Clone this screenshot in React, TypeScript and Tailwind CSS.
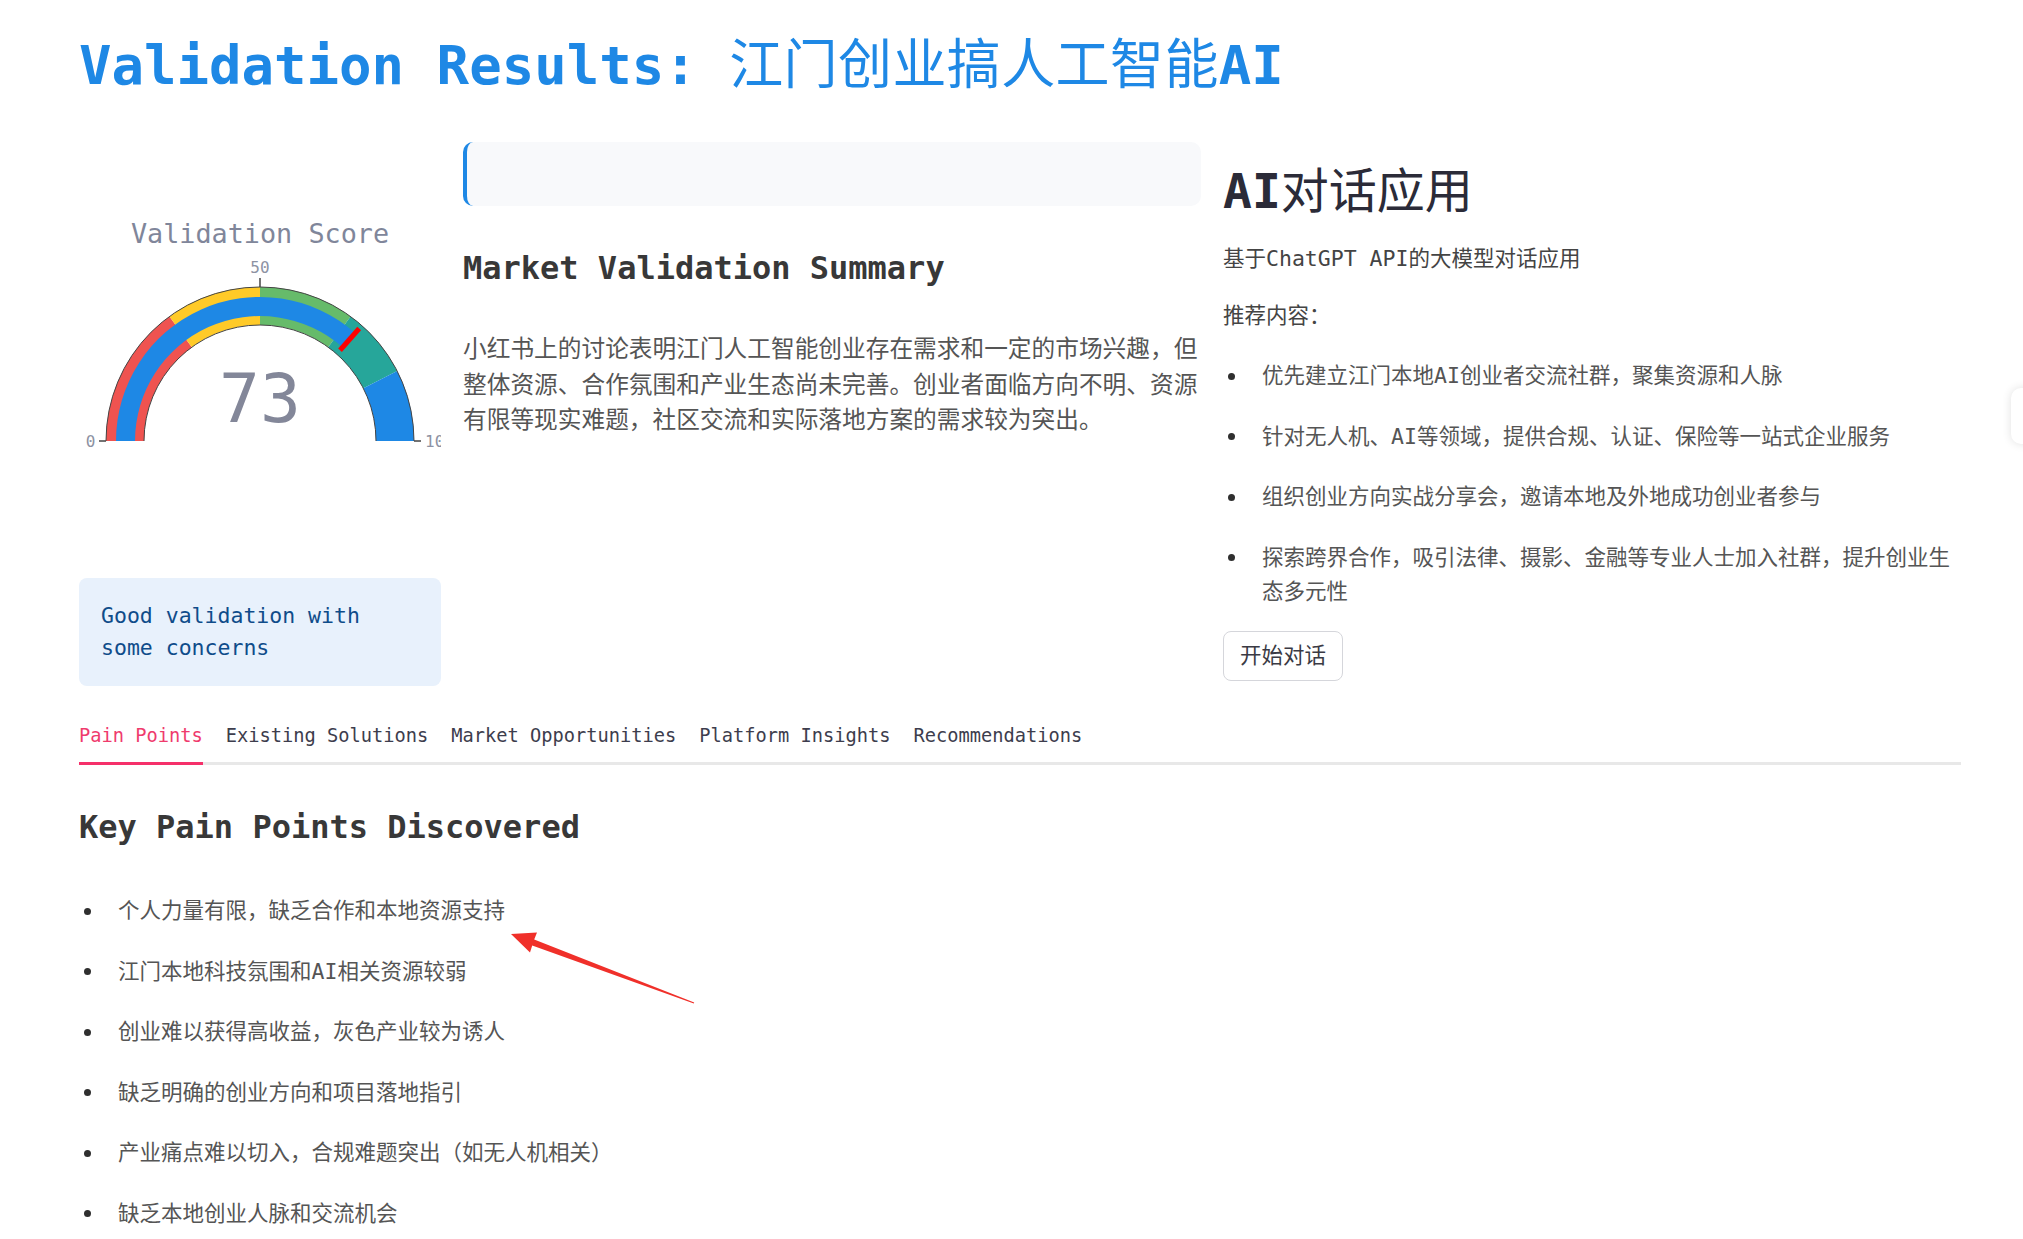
import React from 'react';

const painPoints = [
  '个人力量有限，缺乏合作和本地资源支持',
  '江门本地科技氛围和AI相关资源较弱',
  '创业难以获得高收益，灰色产业较为诱人',
  '缺乏明确的创业方向和项目落地指引',
  '产业痛点难以切入，合规难题突出（如无人机相关）',
  '缺乏本地创业人脉和交流机会',
];

const suggestions = [
  '优先建立江门本地AI创业者交流社群，聚集资源和人脉',
  '针对无人机、AI等领域，提供合规、认证、保险等一站式企业服务',
  '组织创业方向实战分享会，邀请本地及外地成功创业者参与',
  '探索跨界合作，吸引法律、摄影、金融等专业人士加入社群，提升创业生态多元性',
];

const tabs = ['Pain Points', 'Existing Solutions', 'Market Opportunities', 'Platform Insights', 'Recommendations'];

const steps: [number, number, string][] = [
  [0, 30, '#ef5350'],
  [30, 50, '#ffca28'],
  [50, 70, '#66bb6a'],
  [70, 85, '#26a69a'],
  [85, 100, '#1e88e5'],
];

// plotly-like gauge, centre at (181, 299) inside the column
function Gauge({ value }: { value: number }) {
  const cx = 181;
  const cy = 299;

  const pt = (v: number, r: number) => {
    const a = Math.PI - (v / 100) * Math.PI;
    return [cx + r * Math.cos(a), cy - r * Math.sin(a)];
  };

  const sector = (a: number, b: number, ro: number, ri: number) => {
    const [x1, y1] = pt(a, ro);
    const [x2, y2] = pt(b, ro);
    const [x3, y3] = pt(b, ri);
    const [x4, y4] = pt(a, ri);
    return `M${x1} ${y1} A${ro} ${ro} 0 0 1 ${x2} ${y2} L${x3} ${y3} A${ri} ${ri} 0 0 0 ${x4} ${y4} Z`;
  };

  const arc = (r: number) => {
    const [x1, y1] = pt(0, r);
    const [x2, y2] = pt(100, r);
    return `M${x1} ${y1} A${r} ${r} 0 0 1 ${x2} ${y2}`;
  };

  const [t1x, t1y] = pt(value, 121);
  const [t2x, t2y] = pt(value, 150);

  return (
    <svg width="362" height="400" viewBox="0 0 362 400" className="block">
      <text x="181" y="100.5" textAnchor="middle" fontSize="26.8" fill="#80869a" fontFamily="DejaVu Sans Mono, monospace">
        Validation Score
      </text>
      {steps.map(([a, b, c]) => (
        <path key={a} d={sector(a, b, 154, 116)} fill={c} />
      ))}
      <path d={sector(0, value, 144, 125)} fill="#1e88e5" />
      <path d={arc(154)} fill="none" stroke="#444" strokeWidth="1" />
      <path d={arc(116)} fill="none" stroke="#444" strokeWidth="1" />
      <line x1={t1x} y1={t1y} x2={t2x} y2={t2y} stroke="#ff0000" strokeWidth="5" />
      <line x1="20" y1="299" x2="27" y2="299" stroke="#444" strokeWidth="1.5" />
      <line x1="181" y1="136" x2="181" y2="145" stroke="#444" strokeWidth="1.5" />
      <line x1="335" y1="299" x2="342" y2="299" stroke="#444" strokeWidth="1.5" />
      <g fontSize="16" fill="#8d92a3" fontFamily="DejaVu Sans Mono, monospace">
        <text x="16.5" y="305" textAnchor="end">0</text>
        <text x="181" y="131" textAnchor="middle">50</text>
        <text x="346" y="305">100</text>
      </g>
      <text x="181" y="280" textAnchor="middle" fontSize="68" fill="#838799" fontFamily="DejaVu Sans Mono, monospace">
        {value}
      </text>
    </svg>
  );
}

function Bullet() {
  return (
    <span className="w-[39px] shrink-0 pl-[4.5px] pt-[13.5px]">
      <span className="block h-[7px] w-[7px] rounded-full bg-[#2f2f2f]" />
    </span>
  );
}

export default function App() {
  return (
    <div className="relative min-h-[1239px] overflow-hidden bg-white pl-[79px] pr-[62px] pt-[34px] font-['DejaVu_Sans_Mono','Noto_Sans_CJK_SC',monospace]">
      <h1 className="text-[54px] font-bold leading-[64px] text-[#1e88e5]">
        Validation Results: <span className="font-normal tracking-[0.4px]">江门创业搞人工智能</span>AI
      </h1>

      <div className="mt-[44px] grid grid-cols-[362px_738px_738px] gap-x-[22px]">
        {/* score column */}
        <div>
          <Gauge value={73} />
          <div className="mt-[36px] rounded-[8px] bg-[#e8f1fc] px-[22px] py-[22px] text-[21.5px] leading-[32px] text-[#0f4c8a]">
            Good validation with some concerns
          </div>
        </div>

        {/* summary column */}
        <div>
          <div className="h-[64px] rounded-[10px] border-l-4 border-[#1e88e5] bg-[#f8f9fb]" />
          <h3 className="mt-[42px] text-[32px] font-bold leading-[40px] text-[#383838]">Market Validation Summary</h3>
          <p className="mt-[44px] text-[23.7px] leading-[35.7px] text-[#555]">
            小红书上的讨论表明江门人工智能创业存在需求和一定的市场兴趣，但整体资源、合作氛围和产业生态尚未完善。创业者面临方向不明、资源有限等现实难题，社区交流和实际落地方案的需求较为突出。
          </p>
        </div>

        {/* app column */}
        <div className="pt-[20px]">
          <h2 className="text-[48px] font-bold leading-[58px] text-[#2b2b38]">
            AI<span className="font-normal">对话应用</span>
          </h2>
          <p className="mt-[22px] text-[21.5px] leading-[34px] text-[#444]">基于ChatGPT API的大模型对话应用</p>
          <p className="mt-[23px] text-[21.5px] leading-[34px] text-[#444]">推荐内容：</p>
          <ul className="mt-[26px] flex flex-col gap-[26.6px] text-[21.5px] leading-[34px] text-[#555]">
            {suggestions.map((s) => (
              <li key={s} className="flex">
                <Bullet />
                <span>{s}</span>
              </li>
            ))}
          </ul>
          <button className="mt-[22px] flex h-[50px] w-[120px] items-center justify-center rounded-[8px] border border-[#d5d6db] bg-white text-[21.5px] text-[#3a3a44]">
            开始对话
          </button>
        </div>
      </div>

      {/* tabs */}
      <div className="mt-[24px] flex gap-[23px] border-b-[3px] border-[#e8e8e8]">
        {tabs.map((t, i) => (
          <div
            key={t}
            className={
              i === 0
                ? 'flex h-[55px] -mb-[3px] items-center border-b-[3px] border-[#f5306a] text-[18.7px] text-[#ef3b6d]'
                : 'flex h-[55px] -mb-[3px] items-center border-b-[3px] border-transparent text-[18.7px] text-[#3d3d4d]'
            }
          >
            {t}
          </div>
        ))}
      </div>

      <h3 className="mt-[42px] text-[32px] font-bold leading-[40px] text-[#383838]">Key Pain Points Discovered</h3>
      <ul className="mt-[47px] flex flex-col gap-[26.6px] text-[21.5px] leading-[34px] text-[#555]">
        {painPoints.map((p) => (
          <li key={p} className="flex">
            <Bullet />
            <span>{p}</span>
          </li>
        ))}
      </ul>

      {/* red annotation arrow drawn over the screenshot */}
      <svg className="pointer-events-none absolute left-[500px] top-[917px]" width="200" height="95" viewBox="0 0 200 95">
        <polygon points="11,17 37,15.5 34.2,22.5 194.2,85.5 193.8,86.6 32.2,28.6 30,35.5" fill="#f0302a" />
      </svg>

      {/* floating widget peeking in at the right edge */}
      <div className="absolute right-[-40px] top-[388px] h-[56px] w-[52px] rounded-[10px] bg-white shadow-[0_0_10px_rgba(0,0,0,0.12)]" />
    </div>
  );
}
